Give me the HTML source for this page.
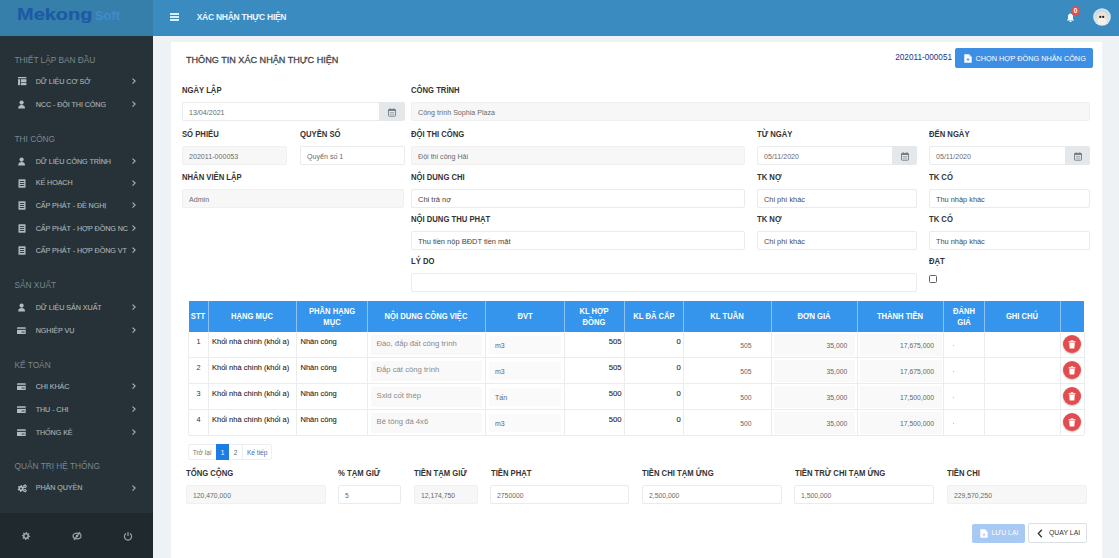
<!DOCTYPE html>
<html><head><meta charset="utf-8">
<style>
*{box-sizing:border-box;margin:0;padding:0}
html,body{width:1119px;height:558px;overflow:hidden;background:#eff2f4;font-family:"Liberation Sans",sans-serif;position:relative}
.a{position:absolute}
.t{position:absolute;white-space:nowrap;font-family:"Liberation Sans",sans-serif}
svg{display:block}
</style></head><body>
<div class='a' style='left:0px;top:0px;width:153px;height:36px;background:#367fab'></div>
<div class='a' style='left:153px;top:0px;width:966px;height:36px;background:#3a8bc0'></div>
<div class='t' style='left:16.5px;top:6.29px;font-size:17.3px;line-height:17.3px;color:#1c5aa5;font-weight:bold;transform:scaleX(1.155);transform-origin:0 0;-webkit-text-stroke:0.2px #1c5aa5'>Mekong</div>
<div class='t' style='left:95px;top:9.44px;font-size:13.6px;line-height:13.6px;color:#3f8ccc;font-weight:bold;transform:scaleX(0.95);transform-origin:0 0'>Soft</div>
<div class='a' style='left:170.4px;top:13.3px;width:9px;height:1.6px;background:#d8efff'></div>
<div class='a' style='left:170.4px;top:16.3px;width:9px;height:1.6px;background:#d8efff'></div>
<div class='a' style='left:170.4px;top:19.3px;width:9px;height:1.6px;background:#d8efff'></div>
<div class='t' style='left:196.7px;top:13.08px;font-size:8.5px;line-height:8.5px;color:#eaf6ff;font-weight:bold;letter-spacing:-0.27px'>XÁC NHẬN THỰC HIỆN</div>
<svg class='a' style='left:1065.5px;top:12.5px' width='9' height='10' viewBox='0 0 9 10'><path d='M4.5 0.6c-1.5 0-2.5 1.2-2.5 2.7v2.4L0.9 7.5h7.2L7 5.7V3.3C7 1.8 6 0.6 4.5 0.6z' fill='#f2fbff'/><rect x='3.5' y='7.8' width='2' height='1.3' rx='0.6' fill='#f2fbff'/></svg>
<div class='a' style='left:1070.8px;top:6.2px;width:9.6px;height:9.6px;background:#d9534f;border-radius:50%'></div>
<div class='t' style='left:875.5999999999999px;width:400px;text-align:center;top:7.88px;font-size:6.5px;line-height:6.5px;color:#fff;font-weight:bold;'>0</div>
<svg class='a' style='left:1093px;top:7.7px' width='18' height='18' viewBox='0 0 18 18'><circle cx='9' cy='9' r='8.8' fill='#d6e6f2'/><path d='M2 6 Q5 1 9 1.5 Q14 1.5 16 7 L15 12 Q9 17 3 12z' fill='#c6dced'/><ellipse cx='9' cy='10' rx='5.8' ry='6.2' fill='#ece3d6'/><ellipse cx='9' cy='13.5' rx='4.5' ry='3.5' fill='#f4f1ec'/><circle cx='7.3' cy='8.9' r='1.1' fill='#1d1d1d'/><circle cx='10.2' cy='8.9' r='1.1' fill='#1d1d1d'/></svg>
<div class='a' style='left:0px;top:36px;width:153px;height:477px;background:#263238'></div>
<div class='a' style='left:0px;top:513px;width:153px;height:45px;background:#1f292e'></div>
<div class='t' style='left:14.5px;top:55.65px;font-size:8.3px;line-height:8.3px;color:#7d878d;font-weight:normal;'>THIẾT LẬP BAN ĐẦU</div>
<div class='t' style='left:14.5px;top:134.94px;font-size:8.3px;line-height:8.3px;color:#7d878d;font-weight:normal;'>THI CÔNG</div>
<div class='t' style='left:14.5px;top:281.25px;font-size:8.3px;line-height:8.3px;color:#7d878d;font-weight:normal;'>SẢN XUẤT</div>
<div class='t' style='left:14.5px;top:360.84px;font-size:8.3px;line-height:8.3px;color:#7d878d;font-weight:normal;'>KẾ TOÁN</div>
<div class='t' style='left:14.5px;top:461.84px;font-size:8.3px;line-height:8.3px;color:#7d878d;font-weight:normal;'>QUẢN TRỊ HỆ THỐNG</div>
<div class='t' style='left:35.7px;top:77.98px;font-size:7.2px;line-height:7.2px;color:#a9b1b5;font-weight:normal;-webkit-text-stroke:0.12px #a9b1b5;letter-spacing:-0.08px'>DỮ LIỆU CƠ SỞ</div>
<svg class='a' style='left:130.8px;top:77.1px' width='6' height='8' viewBox='0 0 6 8'><path d='M1.5 1.6 L4.1 4.1 L1.5 6.6' stroke='#a9b1b6' stroke-width='1.15' fill='none'/></svg>
<svg class='a' style='left:17.7px;top:76.8px' width='9' height='9' viewBox='0 0 9 9'><rect x='0' y='0' width='8.4' height='1.3' fill='#b3bbbf'/><rect x='0' y='2.2' width='2.2' height='6' fill='#b3bbbf'/><rect x='3' y='2.2' width='5.4' height='3' fill='#b3bbbf'/><rect x='3' y='5.8' width='5.4' height='2.4' fill='#b3bbbf'/></svg>
<div class='t' style='left:35.7px;top:100.98px;font-size:7.2px;line-height:7.2px;color:#a9b1b5;font-weight:normal;-webkit-text-stroke:0.12px #a9b1b5;letter-spacing:-0.08px'>NCC - ĐỘI THI CÔNG</div>
<svg class='a' style='left:130.8px;top:100.1px' width='6' height='8' viewBox='0 0 6 8'><path d='M1.5 1.6 L4.1 4.1 L1.5 6.6' stroke='#a9b1b6' stroke-width='1.15' fill='none'/></svg>
<svg class='a' style='left:18.3px;top:100.1px' width='8' height='9' viewBox='0 0 8 9'><circle cx='3.6' cy='2.6' r='2.1' fill='#b3bbbf'/><path d='M0.2 8.4 C0.2 5.8 1.6 5.1 3.6 5.1 C5.6 5.1 7 5.8 7 8.4z' fill='#b3bbbf'/></svg>
<div class='t' style='left:35.7px;top:157.88px;font-size:7.2px;line-height:7.2px;color:#a9b1b5;font-weight:normal;-webkit-text-stroke:0.12px #a9b1b5;letter-spacing:-0.08px'>DỮ LIỆU CÔNG TRÌNH</div>
<svg class='a' style='left:130.8px;top:157px' width='6' height='8' viewBox='0 0 6 8'><path d='M1.5 1.6 L4.1 4.1 L1.5 6.6' stroke='#a9b1b6' stroke-width='1.15' fill='none'/></svg>
<svg class='a' style='left:18.3px;top:157px' width='8' height='9' viewBox='0 0 8 9'><circle cx='3.6' cy='2.6' r='2.1' fill='#b3bbbf'/><path d='M0.2 8.4 C0.2 5.8 1.6 5.1 3.6 5.1 C5.6 5.1 7 5.8 7 8.4z' fill='#b3bbbf'/></svg>
<div class='t' style='left:35.7px;top:179.48px;font-size:7.2px;line-height:7.2px;color:#a9b1b5;font-weight:normal;-webkit-text-stroke:0.12px #a9b1b5;letter-spacing:-0.08px'>KẾ HOẠCH</div>
<svg class='a' style='left:130.8px;top:178.6px' width='6' height='8' viewBox='0 0 6 8'><path d='M1.5 1.6 L4.1 4.1 L1.5 6.6' stroke='#a9b1b6' stroke-width='1.15' fill='none'/></svg>
<svg class='a' style='left:18px;top:178.6px' width='8' height='9' viewBox='0 0 8 9'><rect x='0.5' y='0.3' width='7' height='8.4' fill='#b3bbbf'/><rect x='1.8' y='2' width='4.4' height='0.9' fill='#263238'/><rect x='1.8' y='4' width='4.4' height='0.9' fill='#263238'/><rect x='1.8' y='6' width='4.4' height='0.9' fill='#263238'/></svg>
<div class='t' style='left:35.7px;top:202.18px;font-size:7.2px;line-height:7.2px;color:#a9b1b5;font-weight:normal;-webkit-text-stroke:0.12px #a9b1b5;letter-spacing:-0.08px'>CẤP PHÁT - ĐỀ NGHỊ</div>
<svg class='a' style='left:130.8px;top:201.3px' width='6' height='8' viewBox='0 0 6 8'><path d='M1.5 1.6 L4.1 4.1 L1.5 6.6' stroke='#a9b1b6' stroke-width='1.15' fill='none'/></svg>
<svg class='a' style='left:18px;top:201.3px' width='8' height='9' viewBox='0 0 8 9'><rect x='0.5' y='0.3' width='7' height='8.4' fill='#b3bbbf'/><rect x='1.8' y='2' width='4.4' height='0.9' fill='#263238'/><rect x='1.8' y='4' width='4.4' height='0.9' fill='#263238'/><rect x='1.8' y='6' width='4.4' height='0.9' fill='#263238'/></svg>
<div class='t' style='left:35.7px;top:224.88px;font-size:7.2px;line-height:7.2px;color:#a9b1b5;font-weight:normal;-webkit-text-stroke:0.12px #a9b1b5;letter-spacing:-0.08px'>CẤP PHÁT - HỢP ĐỒNG NC</div>
<svg class='a' style='left:130.8px;top:224px' width='6' height='8' viewBox='0 0 6 8'><path d='M1.5 1.6 L4.1 4.1 L1.5 6.6' stroke='#a9b1b6' stroke-width='1.15' fill='none'/></svg>
<svg class='a' style='left:18px;top:224px' width='8' height='9' viewBox='0 0 8 9'><rect x='0.5' y='0.3' width='7' height='8.4' fill='#b3bbbf'/><rect x='1.8' y='2' width='4.4' height='0.9' fill='#263238'/><rect x='1.8' y='4' width='4.4' height='0.9' fill='#263238'/><rect x='1.8' y='6' width='4.4' height='0.9' fill='#263238'/></svg>
<div class='t' style='left:35.7px;top:246.98px;font-size:7.2px;line-height:7.2px;color:#a9b1b5;font-weight:normal;-webkit-text-stroke:0.12px #a9b1b5;letter-spacing:-0.08px'>CẤP PHÁT - HỢP ĐỒNG VT</div>
<svg class='a' style='left:130.8px;top:246.1px' width='6' height='8' viewBox='0 0 6 8'><path d='M1.5 1.6 L4.1 4.1 L1.5 6.6' stroke='#a9b1b6' stroke-width='1.15' fill='none'/></svg>
<svg class='a' style='left:18px;top:246.1px' width='8' height='9' viewBox='0 0 8 9'><rect x='0.5' y='0.3' width='7' height='8.4' fill='#b3bbbf'/><rect x='1.8' y='2' width='4.4' height='0.9' fill='#263238'/><rect x='1.8' y='4' width='4.4' height='0.9' fill='#263238'/><rect x='1.8' y='6' width='4.4' height='0.9' fill='#263238'/></svg>
<div class='t' style='left:35.7px;top:303.88px;font-size:7.2px;line-height:7.2px;color:#a9b1b5;font-weight:normal;-webkit-text-stroke:0.12px #a9b1b5;letter-spacing:-0.08px'>DỮ LIỆU SẢN XUẤT</div>
<svg class='a' style='left:130.8px;top:303px' width='6' height='8' viewBox='0 0 6 8'><path d='M1.5 1.6 L4.1 4.1 L1.5 6.6' stroke='#a9b1b6' stroke-width='1.15' fill='none'/></svg>
<svg class='a' style='left:18.3px;top:303px' width='8' height='9' viewBox='0 0 8 9'><circle cx='3.6' cy='2.6' r='2.1' fill='#b3bbbf'/><path d='M0.2 8.4 C0.2 5.8 1.6 5.1 3.6 5.1 C5.6 5.1 7 5.8 7 8.4z' fill='#b3bbbf'/></svg>
<div class='t' style='left:35.7px;top:326.98px;font-size:7.2px;line-height:7.2px;color:#a9b1b5;font-weight:normal;-webkit-text-stroke:0.12px #a9b1b5;letter-spacing:-0.08px'>NGHIỆP VỤ</div>
<svg class='a' style='left:130.8px;top:326.1px' width='6' height='8' viewBox='0 0 6 8'><path d='M1.5 1.6 L4.1 4.1 L1.5 6.6' stroke='#a9b1b6' stroke-width='1.15' fill='none'/></svg>
<svg class='a' style='left:17.3px;top:327.0px' width='9' height='8' viewBox='0 0 9 8'><rect x='0' y='0.3' width='8.7' height='6.8' rx='0.5' fill='#b3bbbf'/><rect x='0' y='1.8' width='8.7' height='1.1' fill='#263238'/><rect x='4.6' y='4.6' width='3' height='0.9' fill='#263238'/></svg>
<div class='t' style='left:35.7px;top:383.28px;font-size:7.2px;line-height:7.2px;color:#a9b1b5;font-weight:normal;-webkit-text-stroke:0.12px #a9b1b5;letter-spacing:-0.08px'>CHI KHÁC</div>
<svg class='a' style='left:130.8px;top:382.4px' width='6' height='8' viewBox='0 0 6 8'><path d='M1.5 1.6 L4.1 4.1 L1.5 6.6' stroke='#a9b1b6' stroke-width='1.15' fill='none'/></svg>
<svg class='a' style='left:17.3px;top:383.29999999999995px' width='9' height='8' viewBox='0 0 9 8'><rect x='0' y='0.3' width='8.7' height='6.8' rx='0.5' fill='#b3bbbf'/><rect x='0' y='1.8' width='8.7' height='1.1' fill='#263238'/><rect x='4.6' y='4.6' width='3' height='0.9' fill='#263238'/></svg>
<div class='t' style='left:35.7px;top:405.68px;font-size:7.2px;line-height:7.2px;color:#a9b1b5;font-weight:normal;-webkit-text-stroke:0.12px #a9b1b5;letter-spacing:-0.08px'>THU - CHI</div>
<svg class='a' style='left:130.8px;top:404.8px' width='6' height='8' viewBox='0 0 6 8'><path d='M1.5 1.6 L4.1 4.1 L1.5 6.6' stroke='#a9b1b6' stroke-width='1.15' fill='none'/></svg>
<svg class='a' style='left:17.3px;top:405.7px' width='9' height='8' viewBox='0 0 9 8'><rect x='0' y='0.3' width='8.7' height='6.8' rx='0.5' fill='#b3bbbf'/><rect x='0' y='1.8' width='8.7' height='1.1' fill='#263238'/><rect x='4.6' y='4.6' width='3' height='0.9' fill='#263238'/></svg>
<div class='t' style='left:35.7px;top:428.58px;font-size:7.2px;line-height:7.2px;color:#a9b1b5;font-weight:normal;-webkit-text-stroke:0.12px #a9b1b5;letter-spacing:-0.08px'>THỐNG KÊ</div>
<svg class='a' style='left:130.8px;top:427.7px' width='6' height='8' viewBox='0 0 6 8'><path d='M1.5 1.6 L4.1 4.1 L1.5 6.6' stroke='#a9b1b6' stroke-width='1.15' fill='none'/></svg>
<svg class='a' style='left:17.3px;top:428.59999999999997px' width='9' height='8' viewBox='0 0 9 8'><rect x='0' y='0.3' width='8.7' height='6.8' rx='0.5' fill='#b3bbbf'/><rect x='0' y='1.8' width='8.7' height='1.1' fill='#263238'/><rect x='4.6' y='4.6' width='3' height='0.9' fill='#263238'/></svg>
<div class='t' style='left:35.7px;top:484.48px;font-size:7.2px;line-height:7.2px;color:#a9b1b5;font-weight:normal;-webkit-text-stroke:0.12px #a9b1b5;letter-spacing:-0.08px'>PHÂN QUYỀN</div>
<svg class='a' style='left:130.8px;top:483.6px' width='6' height='8' viewBox='0 0 6 8'><path d='M1.5 1.6 L4.1 4.1 L1.5 6.6' stroke='#a9b1b6' stroke-width='1.15' fill='none'/></svg>
<svg class='a' style='left:16.5px;top:483.0px' width='11' height='10' viewBox='0 0 11 10'><path fill-rule='evenodd' d='M4.00 2.10 L4.88 2.22 L5.25 3.33 L5.77 3.73 L6.94 3.80 L7.28 4.62 L6.50 5.50 L6.41 6.15 L6.94 7.20 L6.40 7.90 L5.25 7.67 L4.65 7.91 L4.00 8.90 L3.12 8.78 L2.75 7.67 L2.23 7.27 L1.06 7.20 L0.72 6.38 L1.50 5.50 L1.59 4.85 L1.06 3.80 L1.60 3.10 L2.75 3.33 L3.35 3.09Z M5.00 5.50 A1.0 1.0 0 1 0 3.00 5.50 A1.0 1.0 0 1 0 5.00 5.50Z' fill='#b3bbbf'/><path fill-rule='evenodd' d='M8.00 1.30 L8.62 1.40 L8.88 2.09 L9.21 2.42 L9.90 2.68 L10.00 3.30 L9.43 3.76 L9.21 4.18 L9.18 4.92 L8.62 5.20 L8.00 4.80 L7.54 4.73 L6.82 4.92 L6.38 4.48 L6.57 3.76 L6.50 3.30 L6.10 2.68 L6.38 2.12 L7.12 2.09 L7.54 1.87Z M8.60 3.30 A0.6 0.6 0 1 0 7.40 3.30 A0.6 0.6 0 1 0 8.60 3.30Z' fill='#b3bbbf'/><path fill-rule='evenodd' d='M8.00 5.80 L8.59 5.89 L8.82 6.57 L9.13 6.88 L9.81 7.11 L9.90 7.70 L9.33 8.13 L9.13 8.52 L9.12 9.24 L8.59 9.51 L8.00 9.10 L7.57 9.03 L6.88 9.24 L6.46 8.82 L6.67 8.13 L6.60 7.70 L6.19 7.11 L6.46 6.58 L7.18 6.57 L7.57 6.37Z M8.60 7.70 A0.6 0.6 0 1 0 7.40 7.70 A0.6 0.6 0 1 0 8.60 7.70Z' fill='#b3bbbf'/></svg>
<svg class='a' style='left:21px;top:531px' width='10' height='10' viewBox='0 0 10 10'><path fill-rule='evenodd' d='M5.00 0.80 L5.82 0.88 L6.19 2.14 L6.72 2.42 L7.97 2.03 L8.49 2.67 L7.86 3.81 L8.04 4.40 L9.20 5.00 L9.12 5.82 L7.86 6.19 L7.58 6.72 L7.97 7.97 L7.33 8.49 L6.19 7.86 L5.60 8.04 L5.00 9.20 L4.18 9.12 L3.81 7.86 L3.28 7.58 L2.03 7.97 L1.51 7.33 L2.14 6.19 L1.96 5.60 L0.80 5.00 L0.88 4.18 L2.14 3.81 L2.42 3.28 L2.03 2.03 L2.67 1.51 L3.81 2.14 L4.40 1.96Z M6.40 5.00 A1.4 1.4 0 1 0 3.60 5.00 A1.4 1.4 0 1 0 6.40 5.00Z' fill='#9aa3a8'/></svg>
<svg class='a' style='left:72px;top:531px' width='10' height='10' viewBox='0 0 10 10'><ellipse cx='5' cy='5' rx='4' ry='2.8' fill='none' stroke='#9aa3a8' stroke-width='1.2'/><circle cx='5' cy='5' r='1.3' fill='#9aa3a8'/><path d='M8 1.2 L2 8.8' stroke='#9aa3a8' stroke-width='1.2'/></svg>
<svg class='a' style='left:122.5px;top:531px' width='10' height='10' viewBox='0 0 10 10'><path d='M3 2.5 A3.6 3.6 0 1 0 7 2.5' fill='none' stroke='#9aa3a8' stroke-width='1.2'/><path d='M5 1 V5' stroke='#9aa3a8' stroke-width='1.2'/></svg>
<div class='a' style='left:171px;top:42px;width:931px;height:520px;background:#fff'></div>
<div class='t' style='left:186px;top:55.77px;font-size:9.1px;line-height:9.1px;color:#43474b;font-weight:normal;-webkit-text-stroke:0.3px #43474b'>THÔNG TIN XÁC NHẬN THỰC HIỆN</div>
<div class='t' style='right:167px;top:54.03px;font-size:8.2px;line-height:8.2px;color:#22358a;font-weight:normal;'>202011-000051</div>
<div class='a' style='left:955px;top:48px;width:138px;height:20px;background:#3d8fe5;border-radius:2px'></div>
<svg class='a' style='left:963.5px;top:54px' width='8' height='9' viewBox='0 0 8 9'><path d='M0.3 0.3 H5 L7.7 3 V8.7 H0.3z' fill='#fff'/><path d='M5 0.3 V3 H7.7' fill='#cfe3f8'/><path d='M2.5 5.5 H5.5 M4 4 V7' stroke='#3d8fe5' stroke-width='0.8'/></svg>
<div class='t' style='left:975.5px;top:54.80px;font-size:7.3px;line-height:7.3px;color:#fff;font-weight:normal;'>CHỌN HỢP ĐỒNG NHÂN CÔNG</div>
<div class='t' style='left:182px;top:85.94px;font-size:8.3px;line-height:8.3px;color:#333;font-weight:bold;transform:scaleX(0.925);transform-origin:0 0'>NGÀY LẬP</div>
<div class='t' style='left:411px;top:85.94px;font-size:8.3px;line-height:8.3px;color:#333;font-weight:bold;transform:scaleX(0.925);transform-origin:0 0'>CÔNG TRÌNH</div>
<div class='a' style='left:182px;top:102px;width:222px;height:19px;background:#fff;border:1px solid #e9ebed;border-radius:2px'></div>
<div class='t' style='left:189px;top:109.14px;font-size:7.6px;line-height:7.6px;color:#6a6a6a;font-weight:normal;transform:scaleX(0.935);transform-origin:0 0'>13/04/2021</div>
<div class='a' style='left:379px;top:102px;width:25.5px;height:19px;background:#e5e8eb;border-radius:0 2px 2px 0'></div>
<svg class='a' style='left:388.3px;top:107.8px' width='8' height='9' viewBox='0 0 8 9'><rect x='0.5' y='1.4' width='7' height='6.8' rx='0.6' fill='none' stroke='#6b7580' stroke-width='0.85'/><rect x='0.5' y='1.4' width='7' height='1.5' fill='#6b7580'/><path d='M2.2 0.3 V1.8 M5.8 0.3 V1.8' stroke='#6b7580' stroke-width='0.9'/><path d='M1.8 4.6 H6.2 M1.8 6.2 H6.2' stroke='#6b7580' stroke-width='0.55'/></svg>
<div class='a' style='left:411px;top:102px;width:679px;height:19px;background:#f7f7f7;border:1px solid #f0f0f0;border-radius:2px'></div>
<div class='t' style='left:418px;top:109.14px;font-size:7.6px;line-height:7.6px;color:#6a6a6a;font-weight:normal;transform:scaleX(0.935);transform-origin:0 0'>Công trình Sophia Plaza</div>
<div class='t' style='left:182px;top:129.64px;font-size:8.3px;line-height:8.3px;color:#333;font-weight:bold;transform:scaleX(0.925);transform-origin:0 0'>SỐ PHIẾU</div>
<div class='t' style='left:300px;top:129.64px;font-size:8.3px;line-height:8.3px;color:#333;font-weight:bold;transform:scaleX(0.925);transform-origin:0 0'>QUYỀN SỐ</div>
<div class='t' style='left:411px;top:129.64px;font-size:8.3px;line-height:8.3px;color:#333;font-weight:bold;transform:scaleX(0.925);transform-origin:0 0'>ĐỘI THI CÔNG</div>
<div class='t' style='left:757px;top:129.64px;font-size:8.3px;line-height:8.3px;color:#333;font-weight:bold;transform:scaleX(0.925);transform-origin:0 0'>TỪ NGÀY</div>
<div class='t' style='left:929px;top:129.64px;font-size:8.3px;line-height:8.3px;color:#333;font-weight:bold;transform:scaleX(0.925);transform-origin:0 0'>ĐẾN NGÀY</div>
<div class='a' style='left:182px;top:146px;width:105px;height:19px;background:#f7f7f7;border:1px solid #f0f0f0;border-radius:2px'></div>
<div class='t' style='left:189px;top:153.14px;font-size:7.6px;line-height:7.6px;color:#6a6a6a;font-weight:normal;transform:scaleX(0.935);transform-origin:0 0'>202011-000053</div>
<div class='a' style='left:300px;top:146px;width:104.5px;height:19px;background:#fff;border:1px solid #e9ebed;border-radius:2px'></div>
<div class='t' style='left:307px;top:153.14px;font-size:7.6px;line-height:7.6px;color:#6a6a6a;font-weight:normal;transform:scaleX(0.935);transform-origin:0 0'>Quyển số 1</div>
<div class='a' style='left:411px;top:146px;width:334px;height:19px;background:#f7f7f7;border:1px solid #f0f0f0;border-radius:2px'></div>
<div class='t' style='left:418px;top:153.14px;font-size:7.6px;line-height:7.6px;color:#6a6a6a;font-weight:normal;transform:scaleX(0.935);transform-origin:0 0'>Đội thi công Hải</div>
<div class='a' style='left:757px;top:146px;width:160px;height:19px;background:#fff;border:1px solid #e9ebed;border-radius:2px'></div>
<div class='t' style='left:764px;top:153.14px;font-size:7.6px;line-height:7.6px;color:#6a6a6a;font-weight:normal;transform:scaleX(0.935);transform-origin:0 0'>05/11/2020</div>
<div class='a' style='left:891.5px;top:146px;width:25.5px;height:19px;background:#e5e8eb;border-radius:0 2px 2px 0'></div>
<svg class='a' style='left:900.8px;top:151.8px' width='8' height='9' viewBox='0 0 8 9'><rect x='0.5' y='1.4' width='7' height='6.8' rx='0.6' fill='none' stroke='#6b7580' stroke-width='0.85'/><rect x='0.5' y='1.4' width='7' height='1.5' fill='#6b7580'/><path d='M2.2 0.3 V1.8 M5.8 0.3 V1.8' stroke='#6b7580' stroke-width='0.9'/><path d='M1.8 4.6 H6.2 M1.8 6.2 H6.2' stroke='#6b7580' stroke-width='0.55'/></svg>
<div class='a' style='left:929px;top:146px;width:161px;height:19px;background:#fff;border:1px solid #e9ebed;border-radius:2px'></div>
<div class='t' style='left:936px;top:153.14px;font-size:7.6px;line-height:7.6px;color:#6a6a6a;font-weight:normal;transform:scaleX(0.935);transform-origin:0 0'>05/11/2020</div>
<div class='a' style='left:1064.5px;top:146px;width:25.5px;height:19px;background:#e5e8eb;border-radius:0 2px 2px 0'></div>
<svg class='a' style='left:1073.8px;top:151.8px' width='8' height='9' viewBox='0 0 8 9'><rect x='0.5' y='1.4' width='7' height='6.8' rx='0.6' fill='none' stroke='#6b7580' stroke-width='0.85'/><rect x='0.5' y='1.4' width='7' height='1.5' fill='#6b7580'/><path d='M2.2 0.3 V1.8 M5.8 0.3 V1.8' stroke='#6b7580' stroke-width='0.9'/><path d='M1.8 4.6 H6.2 M1.8 6.2 H6.2' stroke='#6b7580' stroke-width='0.55'/></svg>
<div class='t' style='left:182px;top:173.44px;font-size:8.3px;line-height:8.3px;color:#333;font-weight:bold;transform:scaleX(0.925);transform-origin:0 0'>NHÂN VIÊN LẬP</div>
<div class='t' style='left:411px;top:173.44px;font-size:8.3px;line-height:8.3px;color:#333;font-weight:bold;transform:scaleX(0.925);transform-origin:0 0'>NỘI DUNG CHI</div>
<div class='t' style='left:757px;top:173.44px;font-size:8.3px;line-height:8.3px;color:#333;font-weight:bold;transform:scaleX(0.925);transform-origin:0 0'>TK NỢ</div>
<div class='t' style='left:929px;top:173.44px;font-size:8.3px;line-height:8.3px;color:#333;font-weight:bold;transform:scaleX(0.925);transform-origin:0 0'>TK CÓ</div>
<div class='a' style='left:182px;top:189px;width:222px;height:19px;background:#f7f7f7;border:1px solid #f0f0f0;border-radius:2px'></div>
<div class='t' style='left:189px;top:196.14px;font-size:7.6px;line-height:7.6px;color:#6a6a6a;font-weight:normal;transform:scaleX(0.935);transform-origin:0 0'>Admin</div>
<div class='a' style='left:411px;top:189px;width:334px;height:19px;background:#fff;border:1px solid #e9ebed;border-radius:2px'></div>
<div class='t' style='left:418px;top:195.50px;font-size:8px;line-height:8px;color:#444;font-weight:normal;transform:scaleX(0.935);transform-origin:0 0'>Chi trả nợ</div>
<div class='a' style='left:757px;top:189px;width:160px;height:19px;background:#fff;border:1px solid #e9ebed;border-radius:2px'></div>
<div class='t' style='left:764px;top:195.59px;font-size:7.9px;line-height:7.9px;color:#4a4a4a;font-weight:normal;transform:scaleX(0.935);transform-origin:0 0'>Chi phí khác</div>
<div class='a' style='left:929px;top:189px;width:161px;height:19px;background:#fff;border:1px solid #e9ebed;border-radius:2px'></div>
<div class='t' style='left:936px;top:195.59px;font-size:7.9px;line-height:7.9px;color:#4a4a4a;font-weight:normal;transform:scaleX(0.935);transform-origin:0 0'>Thu nhập khác</div>
<div class='t' style='left:411px;top:215.34px;font-size:8.3px;line-height:8.3px;color:#333;font-weight:bold;transform:scaleX(0.925);transform-origin:0 0'>NỘI DUNG THU PHẠT</div>
<div class='t' style='left:757px;top:215.34px;font-size:8.3px;line-height:8.3px;color:#333;font-weight:bold;transform:scaleX(0.925);transform-origin:0 0'>TK NỢ</div>
<div class='t' style='left:929px;top:215.34px;font-size:8.3px;line-height:8.3px;color:#333;font-weight:bold;transform:scaleX(0.925);transform-origin:0 0'>TK CÓ</div>
<div class='a' style='left:411px;top:231px;width:334px;height:19px;background:#fff;border:1px solid #e9ebed;border-radius:2px'></div>
<div class='t' style='left:418px;top:237.50px;font-size:8px;line-height:8px;color:#444;font-weight:normal;transform:scaleX(0.935);transform-origin:0 0'>Thu tiền nộp BĐDT tiền mặt</div>
<div class='a' style='left:757px;top:231px;width:160px;height:19px;background:#fff;border:1px solid #e9ebed;border-radius:2px'></div>
<div class='t' style='left:764px;top:237.59px;font-size:7.9px;line-height:7.9px;color:#4a4a4a;font-weight:normal;transform:scaleX(0.935);transform-origin:0 0'>Chi phí khác</div>
<div class='a' style='left:929px;top:231px;width:161px;height:19px;background:#fff;border:1px solid #e9ebed;border-radius:2px'></div>
<div class='t' style='left:936px;top:237.59px;font-size:7.9px;line-height:7.9px;color:#4a4a4a;font-weight:normal;transform:scaleX(0.935);transform-origin:0 0'>Thu nhập khác</div>
<div class='t' style='left:411px;top:257.25px;font-size:8.3px;line-height:8.3px;color:#333;font-weight:bold;transform:scaleX(0.925);transform-origin:0 0'>LÝ DO</div>
<div class='t' style='left:929px;top:257.25px;font-size:8.3px;line-height:8.3px;color:#333;font-weight:bold;transform:scaleX(0.925);transform-origin:0 0'>ĐẠT</div>
<div class='a' style='left:411px;top:273px;width:506px;height:19px;background:#fff;border:1px solid #e9ebed;border-radius:2px'></div>
<div class='a' style='left:929.3px;top:275px;width:8px;height:8px;border:1px solid #606060;border-radius:1.5px;background:#fff'></div>
<div class='a' style='left:188.5px;top:301px;width:895.5px;height:30.5px;background:#3594ec'></div>
<div class='a' style='left:207.7px;top:301px;width:1px;height:30.5px;background:#8cc2f3'></div>
<div class='a' style='left:295.5px;top:301px;width:1px;height:30.5px;background:#8cc2f3'></div>
<div class='a' style='left:366.5px;top:301px;width:1px;height:30.5px;background:#8cc2f3'></div>
<div class='a' style='left:485.0px;top:301px;width:1px;height:30.5px;background:#8cc2f3'></div>
<div class='a' style='left:563.5px;top:301px;width:1px;height:30.5px;background:#8cc2f3'></div>
<div class='a' style='left:623.9px;top:301px;width:1px;height:30.5px;background:#8cc2f3'></div>
<div class='a' style='left:683.1px;top:301px;width:1px;height:30.5px;background:#8cc2f3'></div>
<div class='a' style='left:770.5px;top:301px;width:1px;height:30.5px;background:#8cc2f3'></div>
<div class='a' style='left:856.8px;top:301px;width:1px;height:30.5px;background:#8cc2f3'></div>
<div class='a' style='left:942.5px;top:301px;width:1px;height:30.5px;background:#8cc2f3'></div>
<div class='a' style='left:984.1px;top:301px;width:1px;height:30.5px;background:#8cc2f3'></div>
<div class='a' style='left:1059.5px;top:301px;width:1px;height:30.5px;background:#8cc2f3'></div>
<div class='t' style='left:-1.6500000000000057px;width:400px;text-align:center;top:313.23px;font-size:8.2px;line-height:8.2px;color:#fff;font-weight:bold;transform:scaleX(0.93);transform-origin:50% 0'>STT</div>
<div class='t' style='left:52.099999999999994px;width:400px;text-align:center;top:313.23px;font-size:8.2px;line-height:8.2px;color:#fff;font-weight:bold;transform:scaleX(0.93);transform-origin:50% 0'>HẠNG MỤC</div>
<div class='t' style='left:131.5px;width:400px;text-align:center;top:307.83px;font-size:8.2px;line-height:8.2px;color:#fff;font-weight:bold;transform:scaleX(0.93);transform-origin:50% 0'>PHẦN HẠNG</div>
<div class='t' style='left:131.5px;width:400px;text-align:center;top:319.23px;font-size:8.2px;line-height:8.2px;color:#fff;font-weight:bold;transform:scaleX(0.93);transform-origin:50% 0'>MỤC</div>
<div class='t' style='left:226.25px;width:400px;text-align:center;top:313.23px;font-size:8.2px;line-height:8.2px;color:#fff;font-weight:bold;transform:scaleX(0.93);transform-origin:50% 0'>NỘI DUNG CÔNG VIỆC</div>
<div class='t' style='left:324.75px;width:400px;text-align:center;top:313.23px;font-size:8.2px;line-height:8.2px;color:#fff;font-weight:bold;transform:scaleX(0.93);transform-origin:50% 0'>ĐVT</div>
<div class='t' style='left:394.20000000000005px;width:400px;text-align:center;top:307.83px;font-size:8.2px;line-height:8.2px;color:#fff;font-weight:bold;transform:scaleX(0.93);transform-origin:50% 0'>KL HỢP</div>
<div class='t' style='left:394.20000000000005px;width:400px;text-align:center;top:319.23px;font-size:8.2px;line-height:8.2px;color:#fff;font-weight:bold;transform:scaleX(0.93);transform-origin:50% 0'>ĐỒNG</div>
<div class='t' style='left:454.0px;width:400px;text-align:center;top:313.23px;font-size:8.2px;line-height:8.2px;color:#fff;font-weight:bold;transform:scaleX(0.93);transform-origin:50% 0'>KL ĐÃ CẤP</div>
<div class='t' style='left:527.3px;width:400px;text-align:center;top:313.23px;font-size:8.2px;line-height:8.2px;color:#fff;font-weight:bold;transform:scaleX(0.93);transform-origin:50% 0'>KL TUẦN</div>
<div class='t' style='left:614.15px;width:400px;text-align:center;top:313.23px;font-size:8.2px;line-height:8.2px;color:#fff;font-weight:bold;transform:scaleX(0.93);transform-origin:50% 0'>ĐƠN GIÁ</div>
<div class='t' style='left:700.15px;width:400px;text-align:center;top:313.23px;font-size:8.2px;line-height:8.2px;color:#fff;font-weight:bold;transform:scaleX(0.93);transform-origin:50% 0'>THÀNH TIỀN</div>
<div class='t' style='left:763.8px;width:400px;text-align:center;top:307.83px;font-size:8.2px;line-height:8.2px;color:#fff;font-weight:bold;transform:scaleX(0.93);transform-origin:50% 0'>ĐÁNH</div>
<div class='t' style='left:763.8px;width:400px;text-align:center;top:319.23px;font-size:8.2px;line-height:8.2px;color:#fff;font-weight:bold;transform:scaleX(0.93);transform-origin:50% 0'>GIÁ</div>
<div class='t' style='left:822.3px;width:400px;text-align:center;top:313.23px;font-size:8.2px;line-height:8.2px;color:#fff;font-weight:bold;transform:scaleX(0.93);transform-origin:50% 0'>GHI CHÚ</div>
<div class='t' style='left:872.0px;width:400px;text-align:center;top:313.23px;font-size:8.2px;line-height:8.2px;color:#fff;font-weight:bold;transform:scaleX(0.93);transform-origin:50% 0'></div>
<div class='a' style='left:188.0px;top:331.5px;width:1px;height:103.5px;background:#eaecee'></div>
<div class='a' style='left:207.7px;top:331.5px;width:1px;height:103.5px;background:#eaecee'></div>
<div class='a' style='left:295.5px;top:331.5px;width:1px;height:103.5px;background:#eaecee'></div>
<div class='a' style='left:366.5px;top:331.5px;width:1px;height:103.5px;background:#eaecee'></div>
<div class='a' style='left:485.0px;top:331.5px;width:1px;height:103.5px;background:#eaecee'></div>
<div class='a' style='left:563.5px;top:331.5px;width:1px;height:103.5px;background:#eaecee'></div>
<div class='a' style='left:623.9px;top:331.5px;width:1px;height:103.5px;background:#eaecee'></div>
<div class='a' style='left:683.1px;top:331.5px;width:1px;height:103.5px;background:#eaecee'></div>
<div class='a' style='left:770.5px;top:331.5px;width:1px;height:103.5px;background:#eaecee'></div>
<div class='a' style='left:856.8px;top:331.5px;width:1px;height:103.5px;background:#eaecee'></div>
<div class='a' style='left:942.5px;top:331.5px;width:1px;height:103.5px;background:#eaecee'></div>
<div class='a' style='left:984.1px;top:331.5px;width:1px;height:103.5px;background:#eaecee'></div>
<div class='a' style='left:1059.5px;top:331.5px;width:1px;height:103.5px;background:#eaecee'></div>
<div class='a' style='left:1083.5px;top:331.5px;width:1px;height:103.5px;background:#eaecee'></div>
<div class='a' style='left:188.5px;top:357.0px;width:895.5px;height:1px;background:#eaecee'></div>
<div class='t' style='left:-1.5px;width:400px;text-align:center;top:337.80px;font-size:7.3px;line-height:7.3px;color:#333;font-weight:normal;'>1</div>
<div class='t' style='left:212px;top:337.62px;font-size:7.5px;line-height:7.5px;color:#1e1e1e;font-weight:normal;-webkit-text-stroke:0.1px #1e1e1e'>Khối nhà chính (khối a)</div>
<div class='t' style='left:300.5px;top:337.62px;font-size:7.5px;line-height:7.5px;color:#1e1e1e;font-weight:normal;-webkit-text-stroke:0.1px #1e1e1e'>Nhân công</div>
<div class='a' style='left:370.5px;top:334.5px;width:111px;height:20px;background:#f9f9f9'></div>
<div class='t' style='left:376.5px;top:340.25px;font-size:7.7px;line-height:7.7px;color:#8a8a8a;font-weight:normal;'>Đào, đắp đất công trình</div>
<div class='a' style='left:489px;top:336.0px;width:71.5px;height:18px;background:#fafafa'></div>
<div class='t' style='left:495px;top:342.25px;font-size:7.0px;line-height:7.0px;color:#666;font-weight:normal;'>m3</div>
<div class='t' style='right:497.5px;top:337.95px;font-size:7.7px;line-height:7.7px;color:#2a2a2a;font-weight:normal;-webkit-text-stroke:0.12px #2a2a2a'>505</div>
<div class='t' style='right:438.20000000000005px;top:337.95px;font-size:7.7px;line-height:7.7px;color:#2a2a2a;font-weight:normal;-webkit-text-stroke:0.12px #2a2a2a'>0</div>
<div class='t' style='right:367.5px;top:342.72px;font-size:6.8px;line-height:6.8px;color:#666;font-weight:normal;'>505</div>
<div class='a' style='left:774px;top:334.0px;width:80.5px;height:21.5px;background:#f9f9f9'></div>
<div class='t' style='right:271.70000000000005px;top:342.72px;font-size:6.8px;line-height:6.8px;color:#666;font-weight:normal;'>35,000</div>
<div class='a' style='left:860px;top:334.0px;width:81.5px;height:21.5px;background:#f9f9f9'></div>
<div class='t' style='right:185px;top:342.72px;font-size:6.8px;line-height:6.8px;color:#666;font-weight:normal;'>17,675,000</div>
<div class='a' style='left:952.5px;top:345.0px;width:1.5px;height:1px;background:#bbb'></div>
<div class='a' style='left:1062.6px;top:335.1px;width:18.4px;height:18.4px;background:#e34b4f;border-radius:50%;box-shadow:0 1px 2px rgba(0,0,0,0.25)'></div>
<svg class='a' style='left:1068px;top:339.8px' width='8' height='9' viewBox='0 0 8 9'><rect x='0.6' y='1.2' width='6.8' height='1.2' fill='#fff'/><rect x='2.8' y='0.2' width='2.4' height='1.2' fill='#fff'/><path d='M1.2 2.8 H6.8 L6.3 8.6 H1.7z' fill='#fff'/></svg>
<div class='a' style='left:188.5px;top:383.0px;width:895.5px;height:1px;background:#eaecee'></div>
<div class='t' style='left:-1.5px;width:400px;text-align:center;top:363.80px;font-size:7.3px;line-height:7.3px;color:#333;font-weight:normal;'>2</div>
<div class='t' style='left:212px;top:363.62px;font-size:7.5px;line-height:7.5px;color:#1e1e1e;font-weight:normal;-webkit-text-stroke:0.1px #1e1e1e'>Khối nhà chính (khối a)</div>
<div class='t' style='left:300.5px;top:363.62px;font-size:7.5px;line-height:7.5px;color:#1e1e1e;font-weight:normal;-webkit-text-stroke:0.1px #1e1e1e'>Nhân công</div>
<div class='a' style='left:370.5px;top:360.5px;width:111px;height:20px;background:#f9f9f9'></div>
<div class='t' style='left:376.5px;top:366.25px;font-size:7.7px;line-height:7.7px;color:#8a8a8a;font-weight:normal;'>Đắp cát công trình</div>
<div class='a' style='left:489px;top:362.0px;width:71.5px;height:18px;background:#fafafa'></div>
<div class='t' style='left:495px;top:368.25px;font-size:7.0px;line-height:7.0px;color:#666;font-weight:normal;'>m3</div>
<div class='t' style='right:497.5px;top:363.95px;font-size:7.7px;line-height:7.7px;color:#2a2a2a;font-weight:normal;-webkit-text-stroke:0.12px #2a2a2a'>505</div>
<div class='t' style='right:438.20000000000005px;top:363.95px;font-size:7.7px;line-height:7.7px;color:#2a2a2a;font-weight:normal;-webkit-text-stroke:0.12px #2a2a2a'>0</div>
<div class='t' style='right:367.5px;top:368.72px;font-size:6.8px;line-height:6.8px;color:#666;font-weight:normal;'>505</div>
<div class='a' style='left:774px;top:360.0px;width:80.5px;height:21.5px;background:#f9f9f9'></div>
<div class='t' style='right:271.70000000000005px;top:368.72px;font-size:6.8px;line-height:6.8px;color:#666;font-weight:normal;'>35,000</div>
<div class='a' style='left:860px;top:360.0px;width:81.5px;height:21.5px;background:#f9f9f9'></div>
<div class='t' style='right:185px;top:368.72px;font-size:6.8px;line-height:6.8px;color:#666;font-weight:normal;'>17,675,000</div>
<div class='a' style='left:952.5px;top:371.0px;width:1.5px;height:1px;background:#bbb'></div>
<div class='a' style='left:1062.6px;top:361.1px;width:18.4px;height:18.4px;background:#e34b4f;border-radius:50%;box-shadow:0 1px 2px rgba(0,0,0,0.25)'></div>
<svg class='a' style='left:1068px;top:365.8px' width='8' height='9' viewBox='0 0 8 9'><rect x='0.6' y='1.2' width='6.8' height='1.2' fill='#fff'/><rect x='2.8' y='0.2' width='2.4' height='1.2' fill='#fff'/><path d='M1.2 2.8 H6.8 L6.3 8.6 H1.7z' fill='#fff'/></svg>
<div class='a' style='left:188.5px;top:409.0px;width:895.5px;height:1px;background:#eaecee'></div>
<div class='t' style='left:-1.5px;width:400px;text-align:center;top:389.80px;font-size:7.3px;line-height:7.3px;color:#333;font-weight:normal;'>3</div>
<div class='t' style='left:212px;top:389.62px;font-size:7.5px;line-height:7.5px;color:#1e1e1e;font-weight:normal;-webkit-text-stroke:0.1px #1e1e1e'>Khối nhà chính (khối a)</div>
<div class='t' style='left:300.5px;top:389.62px;font-size:7.5px;line-height:7.5px;color:#1e1e1e;font-weight:normal;-webkit-text-stroke:0.1px #1e1e1e'>Nhân công</div>
<div class='a' style='left:370.5px;top:386.5px;width:111px;height:20px;background:#f9f9f9'></div>
<div class='t' style='left:376.5px;top:392.25px;font-size:7.7px;line-height:7.7px;color:#8a8a8a;font-weight:normal;'>Sxld cốt thép</div>
<div class='a' style='left:489px;top:388.0px;width:71.5px;height:18px;background:#fafafa'></div>
<div class='t' style='left:495px;top:394.25px;font-size:7.0px;line-height:7.0px;color:#666;font-weight:normal;'>Tấn</div>
<div class='t' style='right:497.5px;top:389.95px;font-size:7.7px;line-height:7.7px;color:#2a2a2a;font-weight:normal;-webkit-text-stroke:0.12px #2a2a2a'>500</div>
<div class='t' style='right:438.20000000000005px;top:389.95px;font-size:7.7px;line-height:7.7px;color:#2a2a2a;font-weight:normal;-webkit-text-stroke:0.12px #2a2a2a'>0</div>
<div class='t' style='right:367.5px;top:394.72px;font-size:6.8px;line-height:6.8px;color:#666;font-weight:normal;'>500</div>
<div class='a' style='left:774px;top:386.0px;width:80.5px;height:21.5px;background:#f9f9f9'></div>
<div class='t' style='right:271.70000000000005px;top:394.72px;font-size:6.8px;line-height:6.8px;color:#666;font-weight:normal;'>35,000</div>
<div class='a' style='left:860px;top:386.0px;width:81.5px;height:21.5px;background:#f9f9f9'></div>
<div class='t' style='right:185px;top:394.72px;font-size:6.8px;line-height:6.8px;color:#666;font-weight:normal;'>17,500,000</div>
<div class='a' style='left:952.5px;top:397.0px;width:1.5px;height:1px;background:#bbb'></div>
<div class='a' style='left:1062.6px;top:387.1px;width:18.4px;height:18.4px;background:#e34b4f;border-radius:50%;box-shadow:0 1px 2px rgba(0,0,0,0.25)'></div>
<svg class='a' style='left:1068px;top:391.8px' width='8' height='9' viewBox='0 0 8 9'><rect x='0.6' y='1.2' width='6.8' height='1.2' fill='#fff'/><rect x='2.8' y='0.2' width='2.4' height='1.2' fill='#fff'/><path d='M1.2 2.8 H6.8 L6.3 8.6 H1.7z' fill='#fff'/></svg>
<div class='a' style='left:188.5px;top:434.5px;width:895.5px;height:1px;background:#eaecee'></div>
<div class='t' style='left:-1.5px;width:400px;text-align:center;top:415.80px;font-size:7.3px;line-height:7.3px;color:#333;font-weight:normal;'>4</div>
<div class='t' style='left:212px;top:415.62px;font-size:7.5px;line-height:7.5px;color:#1e1e1e;font-weight:normal;-webkit-text-stroke:0.1px #1e1e1e'>Khối nhà chính (khối a)</div>
<div class='t' style='left:300.5px;top:415.62px;font-size:7.5px;line-height:7.5px;color:#1e1e1e;font-weight:normal;-webkit-text-stroke:0.1px #1e1e1e'>Nhân công</div>
<div class='a' style='left:370.5px;top:412.5px;width:111px;height:20px;background:#f9f9f9'></div>
<div class='t' style='left:376.5px;top:418.25px;font-size:7.7px;line-height:7.7px;color:#8a8a8a;font-weight:normal;'>Bê tông đá 4x6</div>
<div class='a' style='left:489px;top:414.0px;width:71.5px;height:18px;background:#fafafa'></div>
<div class='t' style='left:495px;top:420.25px;font-size:7.0px;line-height:7.0px;color:#666;font-weight:normal;'>m3</div>
<div class='t' style='right:497.5px;top:415.95px;font-size:7.7px;line-height:7.7px;color:#2a2a2a;font-weight:normal;-webkit-text-stroke:0.12px #2a2a2a'>500</div>
<div class='t' style='right:438.20000000000005px;top:415.95px;font-size:7.7px;line-height:7.7px;color:#2a2a2a;font-weight:normal;-webkit-text-stroke:0.12px #2a2a2a'>0</div>
<div class='t' style='right:367.5px;top:420.72px;font-size:6.8px;line-height:6.8px;color:#666;font-weight:normal;'>500</div>
<div class='a' style='left:774px;top:412.0px;width:80.5px;height:21.5px;background:#f9f9f9'></div>
<div class='t' style='right:271.70000000000005px;top:420.72px;font-size:6.8px;line-height:6.8px;color:#666;font-weight:normal;'>35,000</div>
<div class='a' style='left:860px;top:412.0px;width:81.5px;height:21.5px;background:#f9f9f9'></div>
<div class='t' style='right:185px;top:420.72px;font-size:6.8px;line-height:6.8px;color:#666;font-weight:normal;'>17,500,000</div>
<div class='a' style='left:952.5px;top:423.0px;width:1.5px;height:1px;background:#bbb'></div>
<div class='a' style='left:1062.6px;top:413.1px;width:18.4px;height:18.4px;background:#e34b4f;border-radius:50%;box-shadow:0 1px 2px rgba(0,0,0,0.25)'></div>
<svg class='a' style='left:1068px;top:417.8px' width='8' height='9' viewBox='0 0 8 9'><rect x='0.6' y='1.2' width='6.8' height='1.2' fill='#fff'/><rect x='2.8' y='0.2' width='2.4' height='1.2' fill='#fff'/><path d='M1.2 2.8 H6.8 L6.3 8.6 H1.7z' fill='#fff'/></svg>
<div class='a' style='left:188.3px;top:444.3px;width:84px;height:15.3px;border:1px solid #edf0f2;background:#fff;border-radius:2px'></div>
<div class='a' style='left:216px;top:444.1px;width:13.3px;height:15.6px;background:#1b7ce6'></div>
<div class='a' style='left:242.2px;top:444.3px;width:1px;height:15.3px;background:#edf0f2'></div>
<div class='t' style='left:2px;width:400px;text-align:center;top:449.79px;font-size:6.6px;line-height:6.6px;color:#777;font-weight:normal;'>Trở lại</div>
<div class='t' style='left:22.599999999999994px;width:400px;text-align:center;top:449.79px;font-size:6.6px;line-height:6.6px;color:#fff;font-weight:normal;'>1</div>
<div class='t' style='left:35.69999999999999px;width:400px;text-align:center;top:449.79px;font-size:6.6px;line-height:6.6px;color:#666;font-weight:normal;'>2</div>
<div class='t' style='left:57.19999999999999px;width:400px;text-align:center;top:449.79px;font-size:6.6px;line-height:6.6px;color:#3d6fb5;font-weight:normal;'>Kế tiếp</div>
<div class='t' style='left:186px;top:469.14px;font-size:8.3px;line-height:8.3px;color:#333;font-weight:bold;transform:scaleX(0.925);transform-origin:0 0'>TỔNG CỘNG</div>
<div class='a' style='left:185.5px;top:485px;width:140.5px;height:18.5px;background:#f7f7f7;border:1px solid #f0f0f0;border-radius:2px'></div>
<div class='t' style='left:192.5px;top:492.00px;font-size:7.3px;line-height:7.3px;color:#6a6a6a;font-weight:normal;transform:scaleX(0.935);transform-origin:0 0'>120,470,000</div>
<div class='t' style='left:338px;top:469.14px;font-size:8.3px;line-height:8.3px;color:#333;font-weight:bold;transform:scaleX(0.925);transform-origin:0 0'>% TẠM GIỮ</div>
<div class='a' style='left:337.5px;top:485px;width:63.5px;height:18.5px;background:#fff;border:1px solid #e9ebed;border-radius:2px'></div>
<div class='t' style='left:344.5px;top:492.00px;font-size:7.3px;line-height:7.3px;color:#6a6a6a;font-weight:normal;transform:scaleX(0.935);transform-origin:0 0'>5</div>
<div class='t' style='left:414.4px;top:469.14px;font-size:8.3px;line-height:8.3px;color:#333;font-weight:bold;transform:scaleX(0.925);transform-origin:0 0'>TIỀN TẠM GIỮ</div>
<div class='a' style='left:413.9px;top:485px;width:64.3px;height:18.5px;background:#f7f7f7;border:1px solid #f0f0f0;border-radius:2px'></div>
<div class='t' style='left:420.9px;top:492.00px;font-size:7.3px;line-height:7.3px;color:#6a6a6a;font-weight:normal;transform:scaleX(0.935);transform-origin:0 0'>12,174,750</div>
<div class='t' style='left:490.7px;top:469.14px;font-size:8.3px;line-height:8.3px;color:#333;font-weight:bold;transform:scaleX(0.925);transform-origin:0 0'>TIỀN PHẠT</div>
<div class='a' style='left:490.2px;top:485px;width:139px;height:18.5px;background:#fff;border:1px solid #e9ebed;border-radius:2px'></div>
<div class='t' style='left:497.2px;top:492.00px;font-size:7.3px;line-height:7.3px;color:#6a6a6a;font-weight:normal;transform:scaleX(0.935);transform-origin:0 0'>2750000</div>
<div class='t' style='left:642.3px;top:469.14px;font-size:8.3px;line-height:8.3px;color:#333;font-weight:bold;transform:scaleX(0.925);transform-origin:0 0'>TIỀN CHI TẠM ỨNG</div>
<div class='a' style='left:641.8px;top:485px;width:140.7px;height:18.5px;background:#fff;border:1px solid #e9ebed;border-radius:2px'></div>
<div class='t' style='left:648.8px;top:492.00px;font-size:7.3px;line-height:7.3px;color:#6a6a6a;font-weight:normal;transform:scaleX(0.935);transform-origin:0 0'>2,500,000</div>
<div class='t' style='left:794.6px;top:469.14px;font-size:8.3px;line-height:8.3px;color:#333;font-weight:bold;transform:scaleX(0.925);transform-origin:0 0'>TIỀN TRỪ CHI TẠM ỨNG</div>
<div class='a' style='left:794.1px;top:485px;width:140px;height:18.5px;background:#fff;border:1px solid #e9ebed;border-radius:2px'></div>
<div class='t' style='left:801.1px;top:492.00px;font-size:7.3px;line-height:7.3px;color:#6a6a6a;font-weight:normal;transform:scaleX(0.935);transform-origin:0 0'>1,500,000</div>
<div class='t' style='left:947px;top:469.14px;font-size:8.3px;line-height:8.3px;color:#333;font-weight:bold;transform:scaleX(0.925);transform-origin:0 0'>TIỀN CHI</div>
<div class='a' style='left:946.5px;top:485px;width:140.6px;height:18.5px;background:#f7f7f7;border:1px solid #f0f0f0;border-radius:2px'></div>
<div class='t' style='left:953.5px;top:492.00px;font-size:7.3px;line-height:7.3px;color:#6a6a6a;font-weight:normal;transform:scaleX(0.935);transform-origin:0 0'>229,570,250</div>
<div class='a' style='left:971.6px;top:523.6px;width:53.5px;height:19.2px;background:#a7c9f4;border-radius:2px'></div>
<svg class='a' style='left:979.5px;top:528.5px' width='8' height='9' viewBox='0 0 8 9'><path d='M0.3 0.3 H5 L7.7 3 V8.7 H0.3z' fill='#fff'/><path d='M2.5 5.8 H5.5 M4 4.3 V7.3' stroke='#a7c9f4' stroke-width='0.8'/></svg>
<div class='t' style='left:991.5px;top:530.43px;font-size:6.9px;line-height:6.9px;color:#fff;font-weight:normal;'>LƯU LẠI</div>
<div class='a' style='left:1028.2px;top:523.4px;width:59.2px;height:19.7px;background:#fff;border:1px solid #dcdfe3;border-radius:2px'></div>
<svg class='a' style='left:1037px;top:529px' width='6' height='9' viewBox='0 0 6 9'><path d='M4.8 0.8 L1.3 4.5 L4.8 8.2' stroke='#333' stroke-width='1.3' fill='none'/></svg>
<div class='t' style='left:1049px;top:530.43px;font-size:6.9px;line-height:6.9px;color:#333;font-weight:normal;'>QUAY LẠI</div>
</body></html>
